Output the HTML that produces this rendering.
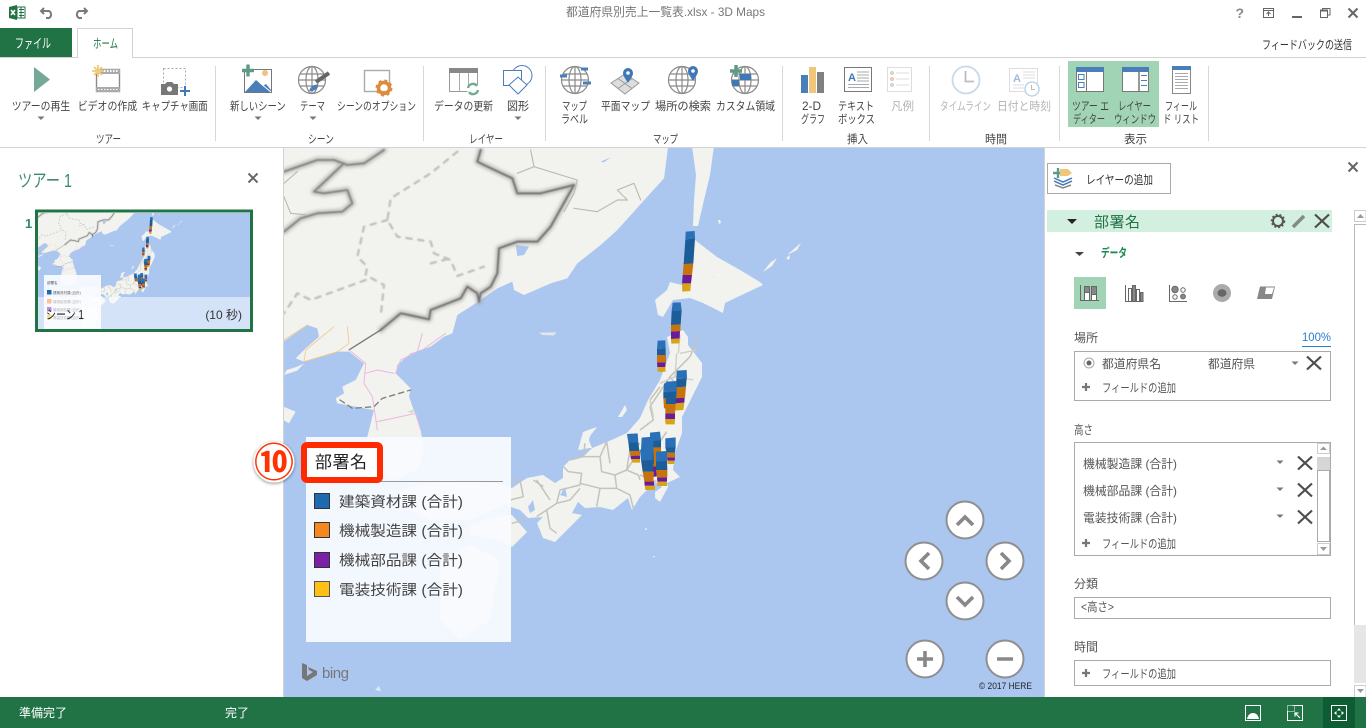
<!DOCTYPE html>
<html lang="ja"><head><meta charset="utf-8"><title>3D Maps</title>
<style>
html,body{margin:0;padding:0;background:#fff;overflow:hidden}
svg{display:block;font-family:"Liberation Sans","Noto Sans CJK JP",sans-serif}
.r{font-size:11.5px;fill:#444}
.g{font-size:11.5px;fill:#b4b4b4}
.p{font-size:12px;fill:#555}
.l{font-size:14.5px;fill:#444}
</style></head><body>
<svg xmlns="http://www.w3.org/2000/svg" width="1366" height="728" viewBox="0 0 1366 728">
<defs>
<filter id="b1" x="-5%" y="-5%" width="110%" height="110%"><feGaussianBlur stdDeviation="5"/></filter>
<filter id="b2" x="-5%" y="-5%" width="110%" height="110%"><feGaussianBlur stdDeviation="1.500"/></filter>
<filter id="b0" x="-5%" y="-5%" width="110%" height="110%"><feGaussianBlur stdDeviation=".35"/></filter>
<filter id="sh" x="-30%" y="-30%" width="160%" height="160%"><feDropShadow dx="0" dy="1" stdDeviation="1.5" flood-color="#000" flood-opacity=".45"/></filter>
<clipPath id="mc"><rect x="284" y="148" width="760" height="549"/></clipPath>
<clipPath id="tc"><rect x="38" y="213" width="212" height="116"/></clipPath>
<g id="globe" fill="none" stroke="#8a8a8a" stroke-width="1.2"><circle r="13.5"/><ellipse rx="6" ry="13.5"/><path d="M-13.5 0H13.5M-12 -6H12M-12 6H12M0 -13.5V13.5"/></g>
<path id="x" d="M-7 -6.5L7 6.5M7 -6.5L-7 6.5" stroke="#4d4d4d" stroke-width="2.2" fill="none"/>
<path id="ar" d="M-3.5 -1.5H3.5L0 2Z" fill="#777"/>
<path id="pl" d="M-4 0H4M0 -4V4" stroke="#777" stroke-width="2.2" fill="none"/>
<g id="mapg">
<rect x="284" y="148" width="760" height="549" fill="#abc7f0"/>
<g filter="url(#b0)">
<!-- continent -->
<g transform="translate(284,150) scale(.33333)">
<path fill="#f2f2ee" d="M-2 -8H1152L1140 85L1090 140L1045 190L1000 240L950 285L880 340L850 385L800 400L720 435L690 420L685 395L640 415L560 470L520 495L505 550L480 560L440 590L380 610L340 645L335 670L380 715L375 740L410 840L420 900L400 960L330 990L270 960L240 900L270 780L160 760L155 745L180 730L175 710L215 690L240 640L195 605L160 605L60 635L35 625L65 595L105 560L100 535L70 525L-2 575Z"/>
<path fill="#f2f2ee" d="M0 675L8 660L40 650L60 640L40 662L0 675ZM-2 770L35 785L15 820L-2 810Z"/>
<path fill="#abc7f0" d="M695 285L735 290L720 315L700 318ZM950 35L980 22L960 37Z"/>
<path fill="#e4e7e8" d="M765 548L818 547L810 556L775 555Z"/>
<g fill="none" stroke="#777" stroke-linejoin="round" stroke-linecap="round">
<g filter="url(#b1)" stroke="#a09f9c" stroke-width="18" opacity=".6">
<path d="M290 540L350 490L375 495L435 508L440 480L530 445L550 410L580 430L585 455L590 430L620 410L640 370L645 295L700 275L760 275L800 230L870 105L770 130L700 130L685 85L600 45L580 35L590 0"/>
<path d="M0 65L100 30L150 30L190 45L240 40L300 0M180 40L90 125L120 130L190 120L205 160L175 185L100 190L50 205L0 245"/>
</g>
<g filter="url(#b2)">
<path d="M290 540L350 490L375 495L435 508L440 480L530 445L550 410L580 430L585 455L590 430L620 410L640 370L645 295L700 275L760 275L800 230L870 105L770 130L700 130L685 85L600 45L580 35L590 0" stroke="#787877" stroke-width="6"/>
<path d="M0 65L100 30L150 30L190 45L240 40L300 0M180 40L90 125L120 130L190 120L205 160L175 185L100 190L50 205L0 245" stroke="#868684" stroke-width="5.500"/>
</g>
<path d="M195 600L290 540" stroke-width="4" stroke="#777"/>
<path stroke="#bcbab4" stroke-width="3.5" d="M870 175L940 185L1000 150L1030 150L1000 120L1050 100L1070 150M740 0L750 50L700 70M750 50L880 90L870 130L840 185M0 140L20 190L70 195M0 100L40 65"/>
<g filter="url(#b2)"><path stroke="#c2c1bc" stroke-width="7" stroke-dasharray="16 20" d="M520 5L440 70L320 145L310 210L340 260L440 275L450 310L500 330L520 378L600 350M310 210L240 230L220 320L250 350L245 375L300 405L290 500M245 390L80 450L40 430L0 490M440 340L500 325"/></g>
<path stroke="#eeb7df" stroke-width="3" d="M195 600L245 640L240 700L265 740L270 770L280 840M245 670L280 660L330 670M335 670L350 630L400 605L415 550M415 600L485 550M280 815L395 790L410 840"/>
<path stroke="#f5c988" stroke-width="2.500" d="M0 570L70 525M60 635L65 600L150 530M190 530L195 580L160 605L60 635"/>
<path stroke="#808080" stroke-width="4" stroke-dasharray="16 12" d="M168 750L205 775L270 770L295 745L380 720"/>
</g>
<path fill="#cfe3b8" d="M370 785L390 778L385 790Z"/>
</g>
<!-- Sakhalin -->
<path fill="#f2f2ee" d="M692 146H714L710 175L704 200L698 226L693 226L694 200L696 175Z"/>
<path fill="#f2f2ee" d="M718 220L720 220L721 223L719 224Z"/>
<!-- Hokkaido -->
<path fill="#f2f2ee" d="M695 240L717 257L740 270L760 282L763 285L748 292L725 303L723 313L703 303L690 298L673 300L663 317L658 315L655 300L667 290L670 282L682 285L685 253Z"/>
<path fill="#f2f2ee" d="M763 272L770 263L777 258L772 266ZM787 255L795 248L801 243L797 250ZM786 258L790 255L789 260Z"/>
<!-- Honshu -->
<path fill="#f2f2ee" d="M667 337L683 330L688 337L688 345L702 363L702 377L692 397L682 417L682 433L675 453L673 470L680 477L667 483L668 487L660 502L655 498L655 482L640 497L632 510L628 498L613 510L600 507L585 508L578 502L572 513L582 515L555 542L543 538L537 523L543 517L528 518L520 510L505 505L470 520L430 520L400 505L400 490L445 480L495 483L512 488L527 478L543 475L555 483L563 478L563 467L570 460L583 457L592 448L588 438L597 427L583 432L578 450L590 448L592 448L607 442L627 433L640 418L648 400L660 380L670 353Z"/>
<path fill="#f2f2ee" d="M583 432L597 427L590 436L587 448L580 450Z"/>
<path fill="#f2f2ee" d="M512 515L527 532L512 547L500 540L470 535L470 525L500 515ZM618 417L625 405L627 410L622 417ZM645 530L646 527L647 530ZM653 556L655 556L654 558ZM500 560L490 620L460 640L440 620L440 560L470 545Z"/>
<path fill="#dfe7ef" d="M375 690L379 686L381 691Z"/>
<path fill="#abc7f0" d="M528 507L533 500L535 510L530 513ZM560 495L565 487L567 497ZM655 482L662 487L655 492Z"/>
<g transform="translate(500,400) scale(.33333)" fill="none" stroke="#c4c3bd" stroke-width="4.500" stroke-linejoin="round">
<path d="M255 130L250 170L300 170L305 215L345 225L380 210L415 225L420 240M300 170L320 125M345 225L350 265L390 285L400 325M350 265L300 265L290 320M240 250L300 265M205 215L245 220L240 255L180 270L170 310L140 330L150 385L170 400M205 215L190 200M170 310L210 300L240 265M110 240L150 300M60 240L70 290L30 300M380 210L390 150L420 130M320 125L330 190M450 20L460 60L420 90M380 210L420 150L470 140L500 95M35 370L75 360M420 225L470 245M100 240L130 260M140 330L110 350M250 170L210 180M20 240L60 240"/>
<path d="M570 -130L510 -70L450 20M570 -130L600 -200M450 0L480 -40M510 -70L540 -30"/>
</g>
<g transform="translate(560,220) scale(.33333)" fill="none" stroke="#cfcec8" stroke-width="4">
<path d="M360 400L410 390M350 400L345 470L300 490M270 540L280 590M360 345L355 400M345 470L400 480"/>
</g>
<g fill="#fff" opacity=".7"><circle cx="704" cy="258" r="1"/><circle cx="718" cy="275" r="1"/><circle cx="730" cy="280" r="1"/></g>
<!-- bars -->
<g transform="translate(560,220) scale(.33333)">
<g id="bars">
<path fill="#d9a316" d="M213 717L240 717L240 728L217 728Z"/><path fill="#6a1f97" d="M211 707L240 707L240 717L213 717Z"/><path fill="#c9730f" d="M208 693L240 693L240 707L211 707Z"/><path fill="#1c5b97" d="M205 666L235 666L238 693L208 693Z"/><path fill="#2b6fb7" d="M201 642L233 640L235 668L205 668Z"/>
<path fill="#c9730f" d="M278 680L303 680L303 700L292 700L292 745L278 745Z"/><path fill="#1c5b97" d="M272 662L303 660L303 682L272 682Z"/><path fill="#2b6fb7" d="M270 638L300 635L303 660L270 665Z"/>
<path fill="#6a1f97" d="M278 740L292 740L290 770L278 770Z"/><path fill="#1c5b97" d="M245 688L280 688L282 730L245 730Z"/><path fill="#2b6fb7" d="M245 653L280 650L280 690L243 690Z"/>
<path fill="#d9a316" d="M322 722L344 722L342 732L323 732Z"/><path fill="#6a1f97" d="M321 712L345 712L344 722L322 722Z"/><path fill="#c9730f" d="M320 698L345 698L345 712L321 712Z"/><path fill="#1c5b97" d="M316 682L347 680L345 698L320 698Z"/><path fill="#2b6fb7" d="M316 655L347 652L347 682L316 683Z"/>
<path fill="#d9a316" d="M254 797L285 797L285 810L256 810Z"/><path fill="#6a1f97" d="M253 783L282 783L282 797L254 797Z"/><path fill="#c9730f" d="M248 755L282 755L280 785L253 785Z"/><path fill="#1c5b97" d="M243 720L280 718L280 755L248 755Z"/><path fill="#2b6fb7" d="M240 690L278 688L278 720L243 722Z"/>
<path fill="#d9a316" d="M292 785L321 785L321 798L292 798Z"/><path fill="#6a1f97" d="M291 772L321 772L321 785L292 785Z"/><path fill="#c9730f" d="M288 750L322 750L322 772L291 772Z"/><path fill="#1c5b97" d="M288 723L321 723L322 750L288 750Z"/><path fill="#2b6fb7" d="M288 695L321 693L321 723L288 725Z"/>
<path fill="#d9a316" d="M346 550L373 548L370 570L345 572Z"/><path fill="#6a1f97" d="M347 533L374 533L373 548L345 550Z"/><path fill="#c9730f" d="M349 502L378 500L375 533L347 535Z"/><path fill="#1c5b97" d="M349 477L380 475L378 500L349 502Z"/><path fill="#2b6fb7" d="M350 452L380 450L381 475L349 477Z"/>
<path fill="#c9730f" d="M310 535L335 535L335 565L312 565Z"/><path fill="#1c5b97" d="M310 515L335 515L335 535L310 535Z"/><path fill="#2b6fb7" d="M312 490L340 488L340 515L310 515Z"/>
<path fill="#d9a316" d="M315 597L345 597L344 613L317 613Z"/><path fill="#6a1f97" d="M316 580L345 580L345 597L316 597Z"/><path fill="#c9730f" d="M316 550L347 550L345 580L316 580Z"/><path fill="#1c5b97" d="M318 515L350 513L347 552L318 552Z"/><path fill="#2b6fb7" d="M318 485L350 483L350 515L318 517Z"/>
<path fill="#d9a316" d="M293 441L316 441L317 455L293 456Z"/><path fill="#6a1f97" d="M291 427L317 427L316 441L292 441Z"/><path fill="#c9730f" d="M291 405L318 404L318 427L291 427Z"/><path fill="#1c5b97" d="M291 387L317 385L317 405L291 405Z"/><path fill="#2b6fb7" d="M293 362L316 361L317 385L291 387Z"/>
<path fill="#d9a316" d="M333 357L359 355L358 370L334 371Z"/><path fill="#6a1f97" d="M333 335L360 333L359 355L333 357Z"/><path fill="#c9730f" d="M333 315L362 313L361 333L333 335Z"/><path fill="#1c5b97" d="M335 272L365 270L362 313L333 315Z"/><path fill="#2b6fb7" d="M338 248L362 247L365 270L335 272Z"/>
<path fill="#d9a316" d="M366 190L393 190L391 213L367 215Z"/><path fill="#6a1f97" d="M368 165L396 165L393 190L366 190Z"/><path fill="#c9730f" d="M371 130L400 130L396 165L368 165Z"/><path fill="#1c5b97" d="M376 58L405 55L400 130L371 132Z"/><path fill="#2b6fb7" d="M377 35L404 33L405 55L376 58Z"/>
</g></g>
</g>
</g>
</defs>

<!-- Title bar -->
<path d="M9 7L17 5V20L9 18Z" fill="#217346"/><rect x="17" y="7" width="8" height="11" fill="#fff" stroke="#217346"/><path d="M19 9.5H24M19 12.5H24M19 15.5H24M21 7V18" stroke="#217346"/>
<path d="M11 10L15 15M15 10L11 15" stroke="#fff" stroke-width="1.6"/>
<path d="M44 8L41 11L44 14M41 11H49A4 4 0 0 1 49 18H46" fill="none" stroke="#7a7a7a" stroke-width="2"/>
<path d="M84 8L87 11L84 14M87 11H79A4 4 0 0 0 79 18H82" fill="none" stroke="#7a7a7a" stroke-width="2"/>
<text x="566" y="16" font-size="12" fill="#777" textLength="199" lengthAdjust="spacingAndGlyphs">都道府県別売上一覧表.xlsx - 3D Maps</text>
<text x="1235.500" y="18" font-size="14" font-weight="700" fill="#888">?</text>
<rect x="1263.500" y="8.500" width="10" height="9" fill="none" stroke="#666"/><path d="M1263 10.500H1274M1268.500 16V12M1266.500 14L1268.500 12L1270.500 14" stroke="#666" fill="none"/>
<rect x="1292" y="16" width="10" height="2" fill="#666"/>
<rect x="1320.500" y="10.500" width="7" height="7" fill="#fff" stroke="#666"/><path d="M1322.500 10V8.500H1330V15H1328" fill="none" stroke="#666"/><path d="M1320 10.500H1328" stroke="#666" stroke-width="2"/>
<path d="M1348.500 8.500L1357.500 17.500M1357.500 8.500L1348.500 17.500" stroke="#666" stroke-width="2"/>

<!-- Tabs -->
<rect x="0" y="28" width="72" height="30" fill="#217346"/>
<text x="15" y="48" font-size="13" fill="#fff" textLength="36" lengthAdjust="spacingAndGlyphs">ファイル</text>
<path d="M77.500 58V28.500H132.500V58" fill="#fff" stroke="#d2d2d2"/>
<text x="93" y="48" font-size="12.500" fill="#217346" textLength="25" lengthAdjust="spacingAndGlyphs">ホーム</text>
<path d="M0 57.500H77.500M132.500 57.500H1366" stroke="#d2d2d2"/>
<text x="1262" y="49" font-size="12" fill="#333" textLength="90" lengthAdjust="spacingAndGlyphs">フィードバックの送信</text>

<!-- Ribbon separators -->
<path d="M215.500 66V141M423.500 66V141M545.500 66V141M782.500 66V141M929.500 66V141M1059.500 66V141M1208.500 66V141" stroke="#d8d8d8"/>
<path d="M0 147.500H1366" stroke="#d2d2d2"/>
<rect x="1068" y="61" width="91" height="66" fill="#a0d4b4"/>

<!-- Ribbon icons -->
<path d="M34 67L50 79.500L34 92Z" fill="#76a995"/>
<g><rect x="96.500" y="69.500" width="23" height="22" fill="#fff" stroke="#8a8a8a" stroke-width="1.4"/><rect x="96" y="69" width="24" height="5" fill="#aaa"/><rect x="96" y="87" width="24" height="5" fill="#aaa"/><path d="M104 70.500H118M98 71.500H118M98 89.500H118" stroke="#fff" stroke-dasharray="1.500 1.500"/><path d="M98 65V77M92 71H104M94 67L102 75M102 67L94 75" stroke="#f3c97b" stroke-width="1.8"/></g>
<rect x="163.500" y="68.500" width="22" height="19" fill="none" stroke="#aaa" stroke-dasharray="2 2"/><path d="M161 84H165L167 82H172L174 84H178V95H161Z" fill="#777"/><circle cx="169.500" cy="89" r="3" fill="#fff" stroke="#777" stroke-width=".8"/><path d="M180 91H190M185 86V96" stroke="#3f78b6" stroke-width="2"/>
<rect x="244.500" y="69.500" width="27" height="23" fill="#fff" stroke="#777"/><path d="M245 92L256 80L263 86L266 84L271 90V92Z" fill="#4a7ebb"/><path d="M260 83L271 92" stroke="#fff"/><circle cx="265" cy="73" r="3" fill="#eec27f"/><path d="M242 70.500H254M248 64.500V76.500" stroke="#5d9b85" stroke-width="3.4"/>
<use href="#globe" x="312" y="80"/><path d="M316 82L329 73" stroke="#666" stroke-width="4"/><path d="M309 91C311 85 316 84 318 85C319 88 314 92 309 91Z" fill="#4a7ebb"/>
<rect x="364.500" y="70.500" width="25" height="21" fill="#fff" stroke="#aaa" stroke-width="1.4"/><circle cx="384" cy="88" r="5.500" fill="none" stroke="#e08a3e" stroke-width="3.500"/><circle cx="384" cy="88" r="7.500" fill="none" stroke="#e08a3e" stroke-width="2" stroke-dasharray="3 2.900"/>
<rect x="449.500" y="68.500" width="28" height="23" fill="#fff" stroke="#999"/><rect x="449" y="68" width="29" height="5" fill="#888"/><path d="M459.500 73V92M468.500 73V92" stroke="#aaa"/><circle cx="473" cy="89" r="6" fill="#fff"/><path d="M468 88A5 5 0 0 1 477 86M478 90A5 5 0 0 1 469 92" fill="none" stroke="#6fae93" stroke-width="2.400"/>
<circle cx="522" cy="75.500" r="10" fill="#fff" stroke="#4a7ebb"/><rect x="503.500" y="70.500" width="18" height="15" fill="#fff" stroke="#4a7ebb"/><path d="M518 77L527 85L518 94L509 85Z" fill="#fff" stroke="#4a7ebb"/>
<use href="#globe" x="575" y="80"/><path d="M581 69H588M560 76H567M583 83H591" stroke="#4a7ebb" stroke-width="3"/>
<path d="M611 83L625 74L639 83L625 94Z" fill="#ddd" stroke="#999"/><path d="M618 78.500L632 88.500M625 74L632 78.500M632 78.500L618 88.500" stroke="#999" fill="none"/><path d="M628 83C625 78 623 76 623 73A5 5 0 0 1 633 73C633 76 631 78 628 83Z" fill="#3f78b6"/><circle cx="628" cy="73" r="1.800" fill="#fff"/>
<use href="#globe" x="682" y="80"/><path d="M693 81C690 76 688 74 688 71A5 5 0 0 1 698 71C698 74 696 76 693 81Z" fill="#3f78b6"/><circle cx="693" cy="71" r="1.800" fill="#fff"/>
<use href="#globe" x="745" y="80"/><path d="M740 74H751V80H740ZM732 80H739V86H732Z" fill="#3f78b6"/><path d="M730 71H742M736 65V77" stroke="#5d9b85" stroke-width="3.400"/>
<rect x="801" y="75" width="7" height="18" fill="#4a7ebb"/><rect x="809" y="67" width="7" height="26" fill="#efc67a"/><rect x="817" y="72" width="7" height="21" fill="#808080"/>
<rect x="844.500" y="67.500" width="27" height="24" fill="#fff" stroke="#777"/><text x="848" y="81" font-size="11" font-weight="700" fill="#3f78b6">A</text><path d="M857 72H869M857 75H869M857 78H869M857 81H869M848 84.500H869M848 87.500H869" stroke="#aaa"/>
<rect x="887.500" y="67.500" width="24" height="24" fill="#fff" stroke="#ddd"/><g fill="none" stroke="#bbb"><circle cx="892" cy="73" r="1.300"/><circle cx="892" cy="79" r="1.300" stroke="#e9a58f"/><circle cx="892" cy="85" r="1.300"/><path d="M896 73H909M896 79H909M896 85H909" stroke="#ddd"/></g>
<circle cx="966" cy="80" r="13.500" fill="#fff" stroke="#c7d9ec" stroke-width="1.800"/><path d="M965.500 71V81.500H974" fill="none" stroke="#bdbdbd" stroke-width="1.800"/>
<rect x="1009.500" y="68.500" width="28" height="23" fill="#fff" stroke="#ddd"/><text x="1013" y="82" font-size="11" font-weight="700" fill="#9dbbdb">A</text><path d="M1023 72H1035M1023 75H1035M1023 78H1035M1013 85H1024M1013 88H1024" stroke="#ddd"/><circle cx="1032" cy="89" r="7" fill="#fff" stroke="#b9cfe6" stroke-width="1.300"/><path d="M1031.500 85V89.500H1035" fill="none" stroke="#bbb"/>
<rect x="1076.500" y="67.500" width="27" height="24" fill="#fff" stroke="#777"/><rect x="1076" y="67" width="28" height="5" fill="#4a7ebb"/><path d="M1086.500 72V92" stroke="#777"/><rect x="1078.500" y="74.500" width="5.500" height="5" fill="none" stroke="#4a7ebb"/><rect x="1078.500" y="82.500" width="5.500" height="5" fill="none" stroke="#4a7ebb"/>
<rect x="1122.500" y="67.500" width="26" height="24" fill="#fff" stroke="#777"/><rect x="1122" y="67" width="27" height="5" fill="#4a7ebb"/><path d="M1139 72V92" stroke="#777" stroke-width="1.500"/><path d="M1141 75.500H1147M1141 80.500H1147M1141 85.500H1147" stroke="#4a7ebb"/>
<rect x="1172.500" y="66.500" width="18" height="27" fill="#fff" stroke="#888"/><rect x="1172" y="66" width="19" height="4" fill="#4a7ebb"/><path d="M1175 73.500H1188M1175 76.500H1188M1175 79.500H1188M1175 82.500H1188M1175 85.500H1188M1175 88.500H1188" stroke="#aaa"/>

<!-- Ribbon labels -->
<text class="r" x="11.700" y="110" textLength="58.500" lengthAdjust="spacingAndGlyphs">ツアーの再生</text>
<text class="r" x="77.700" y="110" textLength="59.500" lengthAdjust="spacingAndGlyphs">ビデオの作成</text>
<text class="r" x="141.700" y="110" textLength="66" lengthAdjust="spacingAndGlyphs">キャプチャ画面</text>
<text class="r" x="230" y="110" textLength="55.700" lengthAdjust="spacingAndGlyphs">新しいシーン</text>
<text class="r" x="300" y="110" textLength="25" lengthAdjust="spacingAndGlyphs">テーマ</text>
<text class="r" x="337" y="110" textLength="79" lengthAdjust="spacingAndGlyphs">シーンのオプション</text>
<text class="r" x="434" y="110" textLength="59" lengthAdjust="spacingAndGlyphs">データの更新</text>
<text class="r" x="507" y="110" textLength="22" lengthAdjust="spacingAndGlyphs">図形</text>
<text class="r" x="562" y="110" textLength="25" lengthAdjust="spacingAndGlyphs">マップ</text>
<text class="r" x="561" y="123" textLength="27" lengthAdjust="spacingAndGlyphs">ラベル</text>
<text class="r" x="601" y="110" textLength="49" lengthAdjust="spacingAndGlyphs">平面マップ</text>
<text class="r" x="655" y="110" textLength="56" lengthAdjust="spacingAndGlyphs">場所の検索</text>
<text class="r" x="716" y="110" textLength="59" lengthAdjust="spacingAndGlyphs">カスタム領域</text>
<text class="r" x="802" y="110" textLength="19" lengthAdjust="spacingAndGlyphs">2-D</text>
<text class="r" x="801" y="123" textLength="24" lengthAdjust="spacingAndGlyphs">グラフ</text>
<text class="r" x="838" y="110" textLength="36" lengthAdjust="spacingAndGlyphs">テキスト</text>
<text class="r" x="838" y="123" textLength="37" lengthAdjust="spacingAndGlyphs">ボックス</text>
<text class="g" x="891" y="110" textLength="23" lengthAdjust="spacingAndGlyphs">凡例</text>
<text class="g" x="940" y="110" textLength="51" lengthAdjust="spacingAndGlyphs">タイムライン</text>
<text class="g" x="997" y="110" textLength="54" lengthAdjust="spacingAndGlyphs">日付と時刻</text>
<text class="r" x="1072" y="110" textLength="37" lengthAdjust="spacingAndGlyphs">ツアー エ</text>
<text class="r" x="1073" y="123" textLength="32" lengthAdjust="spacingAndGlyphs">ディター</text>
<text class="r" x="1118" y="110" textLength="33" lengthAdjust="spacingAndGlyphs">レイヤー</text>
<text class="r" x="1114" y="123" textLength="42" lengthAdjust="spacingAndGlyphs">ウィンドウ</text>
<text class="r" x="1165" y="110" textLength="32" lengthAdjust="spacingAndGlyphs">フィール</text>
<text class="r" x="1163" y="123" textLength="36" lengthAdjust="spacingAndGlyphs">ド リスト</text>
<use href="#ar" x="41" y="118" /><use href="#ar" x="258" y="118"/><use href="#ar" x="313" y="118"/><use href="#ar" x="518" y="118"/>
<text class="r" x="96" y="143" textLength="25" lengthAdjust="spacingAndGlyphs">ツアー</text>
<text class="r" x="308" y="143" textLength="26" lengthAdjust="spacingAndGlyphs">シーン</text>
<text class="r" x="469" y="143" textLength="34" lengthAdjust="spacingAndGlyphs">レイヤー</text>
<text class="r" x="653" y="143" textLength="25" lengthAdjust="spacingAndGlyphs">マップ</text>
<text class="r" x="847" y="143" textLength="21" lengthAdjust="spacingAndGlyphs">挿入</text>
<text class="r" x="985" y="143" textLength="22" lengthAdjust="spacingAndGlyphs">時間</text>
<text class="r" x="1124" y="143" textLength="23" lengthAdjust="spacingAndGlyphs">表示</text>

<!-- Left panel -->
<path d="M283.500 148V697" stroke="#d4d4d4"/>
<text x="18" y="187" font-size="18" fill="#3d8a68" textLength="54" lengthAdjust="spacingAndGlyphs">ツアー 1</text>
<path d="M248.500 173.500L257.500 182.500M257.500 173.500L248.500 182.500" stroke="#666" stroke-width="2"/>
<text x="25" y="228" font-size="13" font-weight="700" fill="#2a9160">1</text>
<rect x="36.500" y="211" width="215" height="119.500" fill="#fff" stroke="#217346" stroke-width="3"/>
<g clip-path="url(#tc)">
<g transform="translate(-41.200,152.500) scale(.279)"><use href="#mapg" clip-path="url(#mc)"/></g>
<rect x="44" y="275" width="57" height="54" fill="#f9fbff" opacity=".92"/>
<text x="47" y="284" font-size="3.500" fill="#555">部署名</text>
<rect x="47" y="290" width="4.500" height="4.500" fill="#1f69b0"/><rect x="47" y="299" width="4.500" height="4.500" fill="#f5871f"/><rect x="47" y="307" width="4.500" height="4.500" fill="#7b21a8"/><rect x="47" y="315" width="4.500" height="4.500" fill="#ffc015"/>
<text x="53" y="294" font-size="3.500" fill="#666">建築資材課 (合計)</text><text x="53" y="303" font-size="3.500" fill="#666">機械製造課 (合計)</text><text x="53" y="311" font-size="3.500" fill="#666">機械部品課 (合計)</text><text x="53" y="319" font-size="3.500" fill="#666">電装技術課 (合計)</text>
<rect x="38" y="297" width="212" height="32" fill="#fff" opacity=".5"/>
</g>
<text x="46" y="319" font-size="12.500" fill="#222" textLength="38" lengthAdjust="spacingAndGlyphs">シーン 1</text>
<text x="242" y="319" font-size="12" fill="#333" text-anchor="end">(10 秒)</text>

<!-- Map -->
<use href="#mapg" clip-path="url(#mc)"/>
<rect x="306" y="437" width="205" height="205" fill="#f9fbff" opacity=".93"/>
<path d="M312 481.500H503" stroke="#999"/>
<rect x="304" y="445" width="76" height="35" rx="3" fill="#fff" stroke="#ff2a00" stroke-width="6"/>
<text x="315" y="468" font-size="17" fill="#222" textLength="52">部署名</text>
<rect x="314.500" y="493.500" width="15" height="15" fill="#1f69b0" stroke="#333"/>
<rect x="314.500" y="522.500" width="15" height="15" fill="#f5871f" stroke="#333"/>
<rect x="314.500" y="552.500" width="15" height="15" fill="#7b21a8" stroke="#333"/>
<rect x="314.500" y="581.500" width="15" height="15" fill="#ffc015" stroke="#555"/>
<text class="l" x="339" y="507" textLength="124" lengthAdjust="spacingAndGlyphs">建築資材課 (合計)</text>
<text class="l" x="339" y="536" textLength="124" lengthAdjust="spacingAndGlyphs">機械製造課 (合計)</text>
<text class="l" x="339" y="565.500" textLength="124" lengthAdjust="spacingAndGlyphs">機械部品課 (合計)</text>
<text class="l" x="339" y="595" textLength="124" lengthAdjust="spacingAndGlyphs">電装技術課 (合計)</text>
<circle cx="274" cy="462" r="20.500" fill="#fff" filter="url(#sh)"/>
<text x="274" y="476.500" font-size="40" font-weight="700" fill="#ff3300" text-anchor="middle">⑩</text>
<path d="M302 663L307 665V676L313 672L309 670L308 667L317 671V675L307 681L302 678Z" fill="#777"/>
<text x="322" y="678" font-size="15" fill="#777" textLength="27">bing</text>
<g fill="#fff" stroke="#8f8f8f" stroke-width="2"><circle cx="965" cy="520" r="18.500"/><circle cx="924" cy="561" r="18.500"/><circle cx="1005" cy="561" r="18.500"/><circle cx="965" cy="601" r="18.500"/><circle cx="925" cy="659" r="18.500"/><circle cx="1005" cy="659" r="18.500"/></g>
<g fill="none" stroke="#888" stroke-width="3.600"><path d="M957 525L965 517L973 525M957 597L965 605L973 597M929 553L921 561L929 569M1001 553L1009 561L1001 569M917 659H933M925 651V667M997 659H1013"/></g>
<text x="979" y="689" font-size="9" fill="#222" textLength="53" lengthAdjust="spacingAndGlyphs">© 2017 HERE</text>

<!-- Right panel -->
<rect x="1044" y="148" width="322" height="549" fill="#fff"/>
<path d="M1044.500 148V697" stroke="#d4d4d4"/>
<path d="M1348.500 162.500L1357.500 171.500M1357.500 162.500L1348.500 171.500" stroke="#666" stroke-width="2"/>
<rect x="1047.500" y="163.500" width="123" height="30" fill="#fff" stroke="#aaa"/>
<path d="M1058 168V178M1053 173H1063" stroke="#5d9b85" stroke-width="2.400"/><path d="M1060 169H1068L1072 173L1068 176H1060Z" fill="#efc67a"/><path d="M1054 178L1063 182L1072 178M1054 181L1063 185L1072 181" fill="none" stroke="#3f78b6" stroke-width="1.500"/><path d="M1055 185L1063 188L1071 185" fill="none" stroke="#888" stroke-width="1.500"/>
<text x="1086" y="184" font-size="12" fill="#333" textLength="67" lengthAdjust="spacingAndGlyphs">レイヤーの追加</text>
<rect x="1047" y="210" width="285" height="22" fill="#d3efe0"/>
<path d="M1067 219H1077L1072 224Z" fill="#222"/>
<text x="1094" y="227" font-size="15" fill="#217346" textLength="46">部署名</text>
<circle cx="1278" cy="221" r="5" fill="none" stroke="#555" stroke-width="2"/><circle cx="1278" cy="221" r="6.500" fill="none" stroke="#555" stroke-width="1.500" stroke-dasharray="2 2"/>
<path d="M1293 227L1304 216" stroke="#888" stroke-width="3.500"/>
<use href="#x" x="1322" y="221"/>
<path d="M1075 252H1084L1079.500 256Z" fill="#444"/>
<text x="1101" y="257" font-size="12" font-weight="700" fill="#16894f" textLength="26" lengthAdjust="spacingAndGlyphs">データ</text>
<rect x="1074" y="277" width="32" height="32" fill="#a0d4b4"/>
<g fill="none" stroke="#666">
<path d="M1080.500 285V300.500H1099"/><rect x="1084.500" y="286.500" width="5" height="14" fill="#fff"/><rect x="1084.500" y="286.500" width="5" height="6" fill="#888"/><rect x="1091.500" y="286.500" width="5" height="14" fill="#fff"/><rect x="1091.500" y="286.500" width="5" height="8" fill="#888"/>
<path d="M1125.500 285V301.500H1143"/><rect x="1128.500" y="288.500" width="3" height="13"/><rect x="1132.500" y="285.500" width="3" height="16" fill="#888"/><rect x="1136.500" y="289.500" width="3" height="12"/><rect x="1140.500" y="292.500" width="2.500" height="9" fill="#888"/>
<path d="M1169.500 285V301.500H1187"/><circle cx="1175" cy="289.500" r="3.200" fill="#888"/><circle cx="1183" cy="290" r="2.200"/><circle cx="1175" cy="297" r="2.200"/><circle cx="1183" cy="296.500" r="2.400" fill="#888"/>
</g>
<ellipse cx="1222" cy="293" rx="9" ry="9" fill="#aaa" transform="rotate(30 1222 293)"/><ellipse cx="1222" cy="293" rx="4.500" ry="3.800" fill="#666"/>
<path d="M1260 286.500H1275L1272 299H1257Z" fill="#888"/><path d="M1266 287.500H1274L1272 294H1265Z" fill="#fff"/>
<text class="p" x="1074" y="342" textLength="24" lengthAdjust="spacingAndGlyphs">場所</text>
<text x="1302" y="341" font-size="12" fill="#2b7cd3" textLength="29" lengthAdjust="spacingAndGlyphs">100%</text>
<path d="M1302 346.500H1331" stroke="#2b7cd3"/>
<rect x="1074.500" y="351.500" width="256" height="49" fill="#fff" stroke="#aaa"/>
<circle cx="1089" cy="363" r="5" fill="#fff" stroke="#aaa"/><circle cx="1089" cy="363" r="2.500" fill="#666"/>
<text class="p" x="1102" y="368" textLength="59" lengthAdjust="spacingAndGlyphs">都道府県名</text>
<text class="p" x="1208" y="368" textLength="47" lengthAdjust="spacingAndGlyphs">都道府県</text>
<use href="#ar" x="1295" y="363"/><use href="#x" x="1314" y="363"/>
<use href="#pl" x="1086" y="387"/>
<text class="p" x="1102" y="392" textLength="74" lengthAdjust="spacingAndGlyphs">フィールドの追加</text>
<text class="p" x="1074" y="434" textLength="19" lengthAdjust="spacingAndGlyphs">高さ</text>
<rect x="1074.500" y="442.500" width="256" height="113" fill="#fff" stroke="#aaa"/>
<g fill="#fff" stroke="#ccc"><rect x="1317.500" y="443.500" width="12" height="10"/><rect x="1317.500" y="470.500" width="12" height="71" stroke="#aaa"/><rect x="1317.500" y="543.500" width="12" height="11"/></g>
<rect x="1317" y="457" width="13" height="13" fill="#d6d6d6"/>
<path d="M1320 450L1323.500 446.500L1327 450ZM1320 547L1323.500 551L1327 547Z" fill="#999"/>
<text class="p" x="1083" y="468" textLength="94" lengthAdjust="spacingAndGlyphs">機械製造課 (合計)</text>
<text class="p" x="1083" y="495" textLength="94" lengthAdjust="spacingAndGlyphs">機械部品課 (合計)</text>
<text class="p" x="1083" y="522" textLength="94" lengthAdjust="spacingAndGlyphs">電装技術課 (合計)</text>
<use href="#ar" x="1280" y="462"/><use href="#ar" x="1280" y="489"/><use href="#ar" x="1280" y="516"/>
<use href="#x" x="1305" y="463"/><use href="#x" x="1305" y="490"/><use href="#x" x="1305" y="517"/>
<use href="#pl" x="1086" y="543"/>
<text class="p" x="1102" y="548" textLength="74" lengthAdjust="spacingAndGlyphs">フィールドの追加</text>
<text class="p" x="1074" y="588" textLength="24" lengthAdjust="spacingAndGlyphs">分類</text>
<rect x="1074.500" y="597.500" width="256" height="21" fill="#fff" stroke="#aaa"/>
<text class="p" x="1081" y="611" textLength="33" lengthAdjust="spacingAndGlyphs">&lt;高さ&gt;</text>
<text class="p" x="1074" y="651" textLength="24" lengthAdjust="spacingAndGlyphs">時間</text>
<rect x="1074.500" y="660.500" width="256" height="25" fill="#fff" stroke="#aaa"/>
<use href="#pl" x="1086" y="673"/>
<text class="p" x="1102" y="678" textLength="74" lengthAdjust="spacingAndGlyphs">フィールドの追加</text>
<!-- Outer scrollbar -->
<rect x="1354.500" y="210.500" width="11.500" height="11" fill="#fff" stroke="#ccc"/>
<path d="M1357 218L1360.500 214L1364 218Z" fill="#999"/>
<path d="M1354.500 224V625M1354 224.500H1366" stroke="#bbb"/>
<rect x="1354" y="625" width="12" height="58" fill="#e6e6e6"/>
<rect x="1354.500" y="685.500" width="11.500" height="12" fill="#fff" stroke="#ccc"/>
<path d="M1357 689L1360.500 693L1364 689Z" fill="#999"/>

<!-- Status bar -->
<rect x="0" y="697" width="1366" height="31" fill="#217346"/>
<text x="19" y="717" font-size="12" fill="#fff" textLength="48" lengthAdjust="spacingAndGlyphs">準備完了</text>
<text x="225" y="717" font-size="12" fill="#fff" textLength="24" lengthAdjust="spacingAndGlyphs">完了</text>
<rect x="1245.500" y="705.500" width="15" height="15" fill="none" stroke="#fff"/>
<path d="M1247 719C1248 714 1251 713 1253 713C1255 713 1258 714 1259 719Z" fill="#fff"/>
<path d="M1292 705.500H1302.500V720.500H1287.500V711" fill="none" stroke="#fff"/>
<rect x="1287.500" y="705.500" width="7" height="6" fill="#217346" stroke="#fff" stroke-dasharray="1 1"/>
<path d="M1300 718L1295.500 713.500M1295 716.500V713H1298.500" fill="none" stroke="#fff" stroke-width="1.200"/>
<rect x="1323" y="697" width="32" height="31" fill="#0d5c34"/>
<rect x="1331.500" y="705.500" width="15" height="15" fill="none" stroke="#fff"/>
<path d="M1339 708L1341 710.500H1337ZM1339 718L1341 715.500H1337ZM1334 713L1336.500 711V715ZM1344 713L1341.500 711V715Z" fill="#fff"/>
</svg>
</body></html>
